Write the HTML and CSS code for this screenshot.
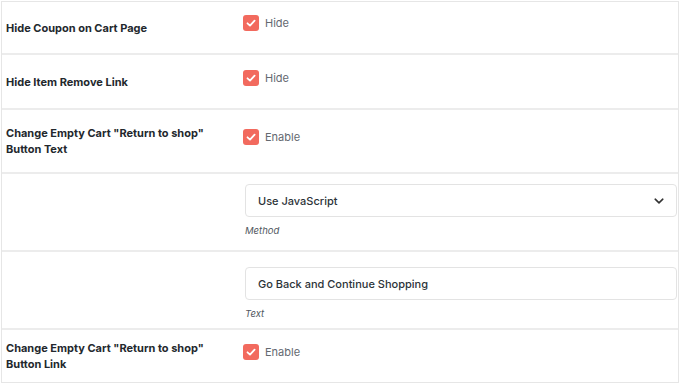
FILE: index.html
```html
<!DOCTYPE html>
<html>
<head>
<meta charset="utf-8">
<link rel="stylesheet" href="styles.css">
</head>
<body>
<div class="table">
  <div class="row row-first">
    <div class="label">Hide Coupon on Cart Page</div>
    <div class="field">
      <span class="check"><svg viewBox="0 0 16 16" width="16" height="16"><path d="M4.5 8.3 L7 10.6 L11.6 5.6" fill="none" stroke="#fff" stroke-width="1.8" stroke-linecap="round" stroke-linejoin="round"/></svg></span>
      <span class="check-text">Hide</span>
    </div>
  </div>
  <div class="row row-second">
    <div class="label">Hide Item Remove Link</div>
    <div class="field">
      <span class="check"><svg viewBox="0 0 16 16" width="16" height="16"><path d="M4.5 8.3 L7 10.6 L11.6 5.6" fill="none" stroke="#fff" stroke-width="1.8" stroke-linecap="round" stroke-linejoin="round"/></svg></span>
      <span class="check-text">Hide</span>
    </div>
  </div>
  <div class="row">
    <div class="label">Change Empty Cart "Return to shop"<br>Button Text</div>
    <div class="field">
      <span class="check"><svg viewBox="0 0 16 16" width="16" height="16"><path d="M4.5 8.3 L7 10.6 L11.6 5.6" fill="none" stroke="#fff" stroke-width="1.8" stroke-linecap="round" stroke-linejoin="round"/></svg></span>
      <span class="check-text">Enable</span>
    </div>
  </div>
  <div class="row row-select">
    <div class="label"></div>
    <div class="field-block">
      <div class="box">
        <span class="box-text">Use JavaScript</span>
        <svg class="chev" viewBox="0 0 10 6" width="10" height="6"><path d="M1.2 1.2 L5 4.8 L8.8 1.2" fill="none" stroke="#333" stroke-width="1.6" stroke-linecap="round" stroke-linejoin="round"/></svg>
      </div>
      <div class="desc">Method</div>
    </div>
  </div>
  <div class="row row-text">
    <div class="label"></div>
    <div class="field-block">
      <div class="box">
        <span class="box-text">Go Back and Continue Shopping</span>
      </div>
      <div class="desc">Text</div>
    </div>
  </div>
  <div class="row row-last">
    <div class="label">Change Empty Cart "Return to shop"<br>Button Link</div>
    <div class="field">
      <span class="check"><svg viewBox="0 0 16 16" width="16" height="16"><path d="M4.5 8.3 L7 10.6 L11.6 5.6" fill="none" stroke="#fff" stroke-width="1.8" stroke-linecap="round" stroke-linejoin="round"/></svg></span>
      <span class="check-text">Enable</span>
    </div>
  </div>
</div>
</body>
</html>
```

FILE: styles.css
```css
html, body {
  margin: 0;
  padding: 0;
  background: #fff;
}
body {
  font-family: Inter, "Noto Sans", sans-serif;
  color: #1d2327;
}
.table {
  margin: 1px 0 0 1px;
  width: 678px;
  box-sizing: border-box;
  border: 1px solid #e6e6e6;
}
.row {
  display: flex;
  border-bottom: 2px solid #ececec;
}
.row:last-child {
  border-bottom: none;
}
.label {
  width: 237px;
  flex: none;
  padding: 15px 0 15px 4px;
  display: flex;
  align-items: center;
  font-size: 11px;
  font-weight: 700;
  line-height: 16px;
  color: #23282d;
}
.row-last .label {
  padding: 10px 0 10px 4px;
}
.field {
  flex: 1;
  display: flex;
  align-items: center;
  padding: 13px 0 22px;
}
.row-second .field {
  padding: 15px 0 22px;
}
.check {
  width: 16px;
  height: 16px;
  border-radius: 3px;
  background: #f26a5e;
  display: inline-flex;
  flex: none;
}
.check-text {
  margin-left: 6px;
  font-size: 11px;
  color: #646970;
}
.field-block {
  flex: 1;
  padding: 10px 1px 13px 2px;
  display: flex;
  flex-direction: column;
  gap: 8px;
}
.row-text .field-block {
  padding: 15px 1px 8px 2px;
}
.box {
  height: 31px;
  border: 1px solid #e3e3e3;
  border-radius: 4px;
  display: flex;
  align-items: center;
  justify-content: space-between;
  padding: 0 12px 0 12px;
}
.box-text {
  font-size: 11px;
  font-weight: 500;
  color: #2c3338;
}
.chev {
  flex: none;
}
.desc {
  font-size: 9.5px;
  font-style: italic;
  color: #50575e;
  line-height: 12px;
}
```
